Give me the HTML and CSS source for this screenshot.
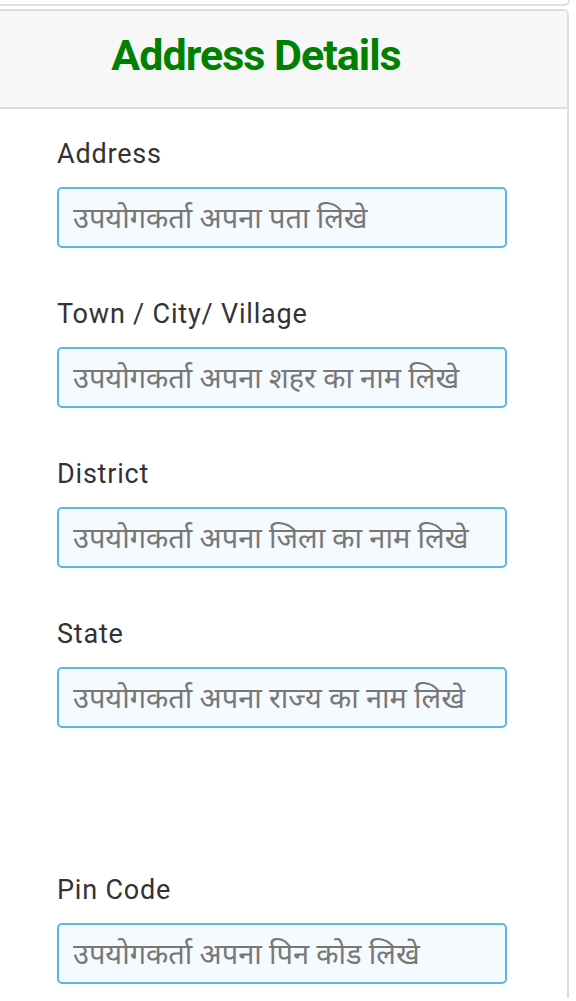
FILE: index.html
```html
<!DOCTYPE html>
<html>
  <head>
    <meta charset="utf-8">
    <link rel="stylesheet" href="styles.css">
  </head>
  <body>
    <div class="prev-card"></div>

    <div class="card">
      <div class="card-header">
        <h2 class="card-title">Address Details</h2>
      </div>

      <div class="card-body">
        <div class="form-group">
          <label for="address">Address</label>
          <input type="text" id="address" class="form-control" placeholder="उपयोगकर्ता अपना पता लिखे" />
        </div>

        <div class="form-group">
          <label for="city">Town / City/ Village</label>
          <input type="text" id="city" class="form-control" placeholder="उपयोगकर्ता अपना शहर का नाम लिखे" />
        </div>

        <div class="form-group">
          <label for="district">District</label>
          <input type="text" id="district" class="form-control" placeholder="उपयोगकर्ता अपना जिला का नाम लिखे" />
        </div>

        <div class="form-group">
          <label for="state">State</label>
          <input type="text" id="state" class="form-control" placeholder="उपयोगकर्ता अपना राज्य का नाम लिखे" />
        </div>

        <div class="form-group pin-group">
          <label for="pincode">Pin Code</label>
          <input type="text" id="pincode" class="form-control" placeholder="उपयोगकर्ता अपना पिन कोड लिखे" />
        </div>
      </div>
    </div>
  </body>
</html>
```

FILE: styles.css
```css
body {
  margin: 0;
  background: #fff;
  font-family: Roboto, "Noto Sans Devanagari", "Noto Sans", sans-serif;
  color: #333;
  overflow: hidden;
}

/* bottom edge of the card above */
.prev-card {
  width: 568px;
  height: 4px;
  border-right: 2px solid #e0e0e0;
  border-bottom: 2px solid #e0e0e0;
  border-radius: 0 0 6px 0;
}

.card {
  box-sizing: border-box;
  width: 626px;
  margin: 3px 0 0 -57px;
  border: 2px solid #ddd;
  border-bottom: none;
  border-radius: 6px 6px 0 0;
  background: #fff;
}

.card-header {
  height: 96px;
  background: #f7f7f7;
  border-bottom: 2px solid #ddd;
  border-radius: 6px 6px 0 0;
  display: flex;
  align-items: center;
  justify-content: center;
}

.card-title {
  margin: 0 0 8px;
  color: #008000;
  font-size: 43px;
  font-weight: 700;
  letter-spacing: -1px;
}

.card-body {
  padding: 30px 60px 14px 112px;
}

.form-group {
  display: flex;
  flex-direction: column;
  margin-bottom: 51px;
}

.form-group:last-child {
  margin-bottom: 0;
}

.form-group label {
  font-size: 27px;
  line-height: 30px;
  letter-spacing: 0.8px;
  margin-bottom: 18px;
}

.pin-group {
  margin-top: 147px;
}

.form-control {
  box-sizing: border-box;
  width: 450px;
  height: 61px;
  padding: 0 14px;
  border: 2px solid #5bb8dc;
  border-radius: 5px;
  background: #f5faff;
  font-family: inherit;
  font-size: 29px;
  color: #555;
  outline: none;
}

.form-control::placeholder {
  color: #777;
}
```
